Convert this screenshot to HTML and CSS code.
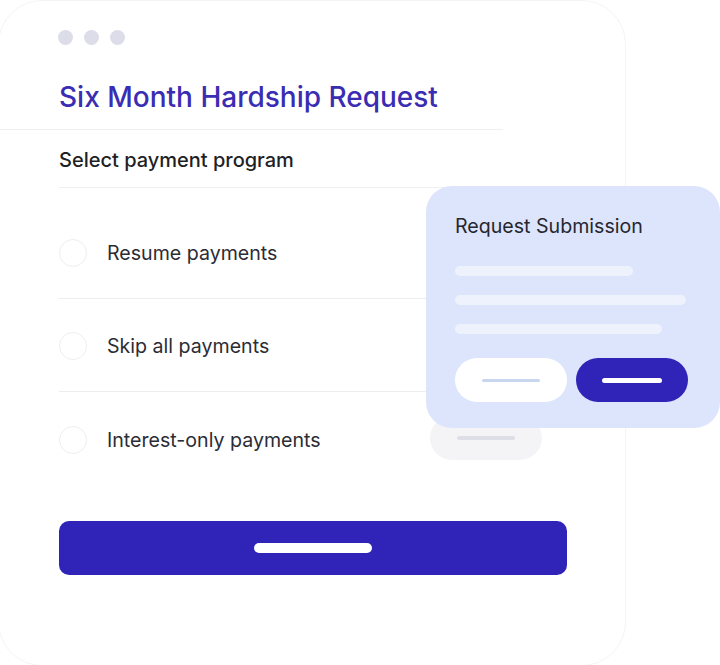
FILE: index.html
```html
<!DOCTYPE html>
<html lang="en">
<head>
<meta charset="utf-8">
<title>Six Month Hardship Request</title>
<link rel="stylesheet" href="styles.css">
</head>
<body>
  <div class="window">
    <div class="dots"><span></span><span></span><span></span></div>
    <header class="head">
      <h1 class="title">Six Month Hardship Request</h1>
    </header>
    <section class="form">
      <div class="label">Select payment program</div>
      <ul class="options">
        <li class="option"><span class="radio"></span><span class="opt-text">Resume payments</span></li>
        <li class="option"><span class="radio"></span><span class="opt-text">Skip all payments</span></li>
        <li class="option last"><span class="radio"></span><span class="opt-text">Interest-only payments</span><span class="ghost-pill"><i></i></span></li>
      </ul>
      <button class="submit" type="button"><i></i></button>
    </section>

    <div class="popup">
      <div class="popup-title">Request Submission</div>
      <div class="lines">
        <span class="line l1"></span>
        <span class="line l2"></span>
        <span class="line l3"></span>
      </div>
      <div class="actions">
        <span class="pill pill-light"><i></i></span>
        <span class="pill pill-dark"><i></i></span>
      </div>
    </div>
  </div>
</body>
</html>
```

FILE: styles.css
```css
html, body {
  margin: 0;
  padding: 0;
  background: #ffffff;
  overflow: hidden;
}

body {
  width: 720px;
  height: 665px;
  font-family: "Inter", "Lato", sans-serif;
  color: #25252e;
}

/* outer app window, left edge tucked just past the viewport */
.window {
  position: relative;
  box-sizing: border-box;
  width: 628px;
  height: 666px;
  margin-left: -2px;
  border: 1px solid #f4f4f6;
  border-radius: 44px;
  padding-top: 29px;
}

.dots {
  display: flex;
  gap: 11px;
  padding-left: 59px;
}
.dots span {
  width: 15px;
  height: 15px;
  border-radius: 50%;
  background: #dddde9;
}

.head {
  width: 504px;
  border-bottom: 1.5px solid #efeff2;
  padding: 33px 0 13px 60px;
  box-sizing: border-box;
}
.title {
  margin: 0;
  font-size: 28px;
  font-weight: 500;
  line-height: 38px;
  color: #3a2db3;
}

.form {
  padding-left: 60px;
  width: 508px;
}

.label {
  height: 58px;
  display: flex;
  align-items: center;
  padding-top: 3px;
  font-size: 20px;
  font-weight: 500;
  color: #1f1f26;
  border-bottom: 1.5px solid #f0f0f3;
  box-sizing: border-box;
  width: 540px;
}

.options {
  list-style: none;
  margin: 18px 0 0;
  padding: 0;
}
.option {
  position: relative;
  display: flex;
  align-items: center;
  gap: 20px;
  height: 93px;
  border-bottom: 1.5px solid #ededf1;
  box-sizing: border-box;
  padding-top: 2px;
  width: 420px;
}
.option.last {
  border-bottom: 0;
}
.radio {
  width: 28px;
  height: 28px;
  border-radius: 50%;
  border: 1.5px solid #eeeef1;
  box-sizing: border-box;
  flex: none;
}
.opt-text {
  font-size: 19.6px;
  color: #2c2c35;
}

/* faded action pill peeking out below the dialog */
.ghost-pill {
  position: absolute;
  left: 371px;
  top: 24px;
  width: 112px;
  height: 44px;
  border-radius: 22px;
  background: #f4f4f7;
  display: flex;
  align-items: center;
  justify-content: center;
}
.ghost-pill i {
  width: 58px;
  height: 4px;
  border-radius: 2px;
  background: #dedee6;
}

.submit {
  display: flex;
  align-items: center;
  justify-content: center;
  margin-top: 36px;
  width: 508px;
  height: 54px;
  border: 0;
  border-radius: 10px;
  background: #2f23b8;
  padding: 0;
}
.submit i {
  width: 118px;
  height: 10px;
  border-radius: 5px;
  background: #ffffff;
}

/* floating submission dialog */
.popup {
  position: absolute;
  left: 427px;
  top: 185px;
  width: 294px;
  height: 242px;
  box-sizing: border-box;
  border-radius: 26px;
  background: #dce5fb;
  padding: 27px 0 0 29px;
}
.popup-title {
  font-size: 19.6px;
  color: #26262f;
  line-height: 26px;
}
.lines {
  display: flex;
  flex-direction: column;
  gap: 19px;
  margin-top: 27px;
}
.line {
  display: block;
  height: 10px;
  border-radius: 5px;
  background: #eef2fd;
}
.l1 { width: 178px; }
.l2 { width: 231px; }
.l3 { width: 207px; }

.actions {
  display: flex;
  gap: 9px;
  margin-top: 24px;
}
.pill {
  width: 112px;
  height: 44px;
  border-radius: 22px;
  display: flex;
  align-items: center;
  justify-content: center;
}
.pill-light { background: #ffffff; }
.pill-light i {
  width: 58px;
  height: 3px;
  border-radius: 2px;
  background: #c9d6f0;
}
.pill-dark { background: #2f23b8; }
.pill-dark i {
  width: 60px;
  height: 5px;
  border-radius: 3px;
  background: #ffffff;
}
```
